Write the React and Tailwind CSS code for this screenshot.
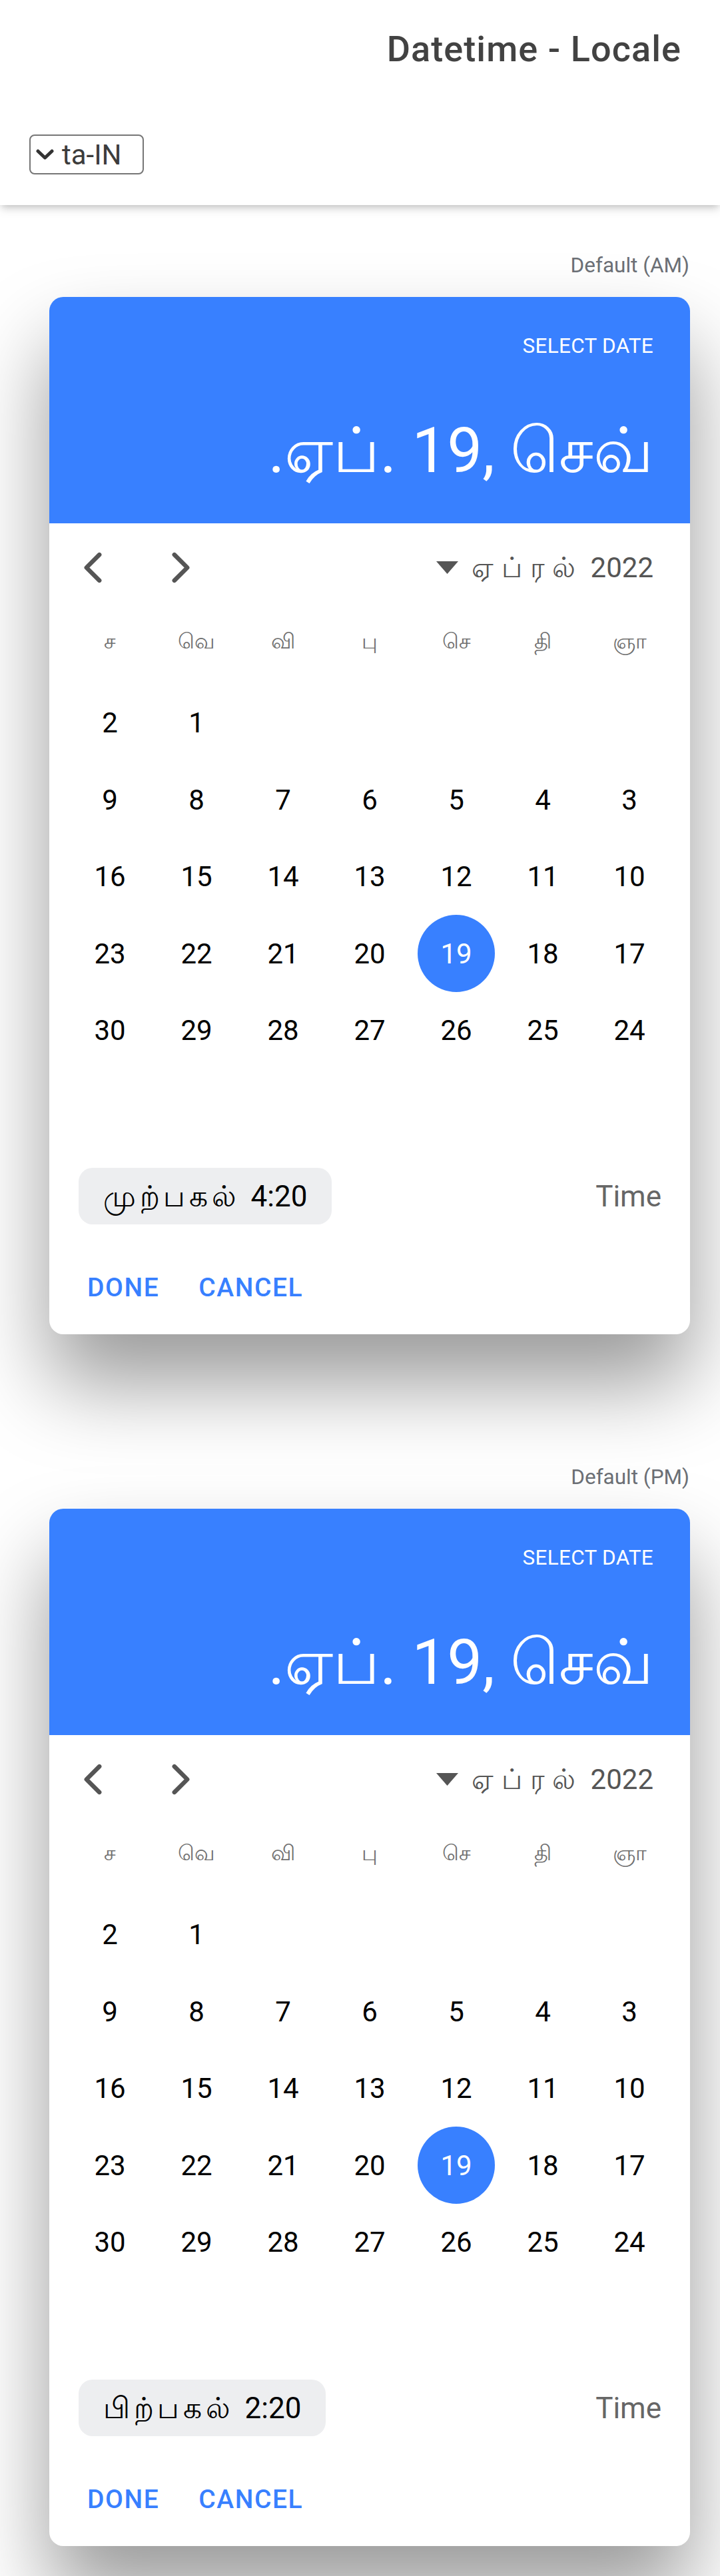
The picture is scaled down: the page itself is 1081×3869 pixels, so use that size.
import React from 'react';

const BLUE = '#3880ff';

const weekdays = ['ச', 'வெ', 'வி', 'பு', 'செ', 'தி', 'ஞா'];

const rows = [
  [2, 1, null, null, null, null, null],
  [9, 8, 7, 6, 5, 4, 3],
  [16, 15, 14, 13, 12, 11, 10],
  [23, 22, 21, 20, 19, 18, 17],
  [30, 29, 28, 27, 26, 25, 24],
  [null, null, null, null, null, null, null],
];

const Chevron = ({ dir }) => (
  <svg width="69" height="69" viewBox="0 0 512 512" className="text-[#555]">
    <path
      d={dir === 'left' ? 'M328 112L184 256l144 144' : 'M184 112l144 144-144 144'}
      fill="none"
      stroke="currentColor"
      strokeWidth="48"
      strokeLinecap="round"
      strokeLinejoin="round"
    />
  </svg>
);

const DatetimeCard = ({ label, meridiem, time }) => (
  <section>
    <p className="pr-[46px] text-right text-[31.5px] leading-[42px] text-[#6b6f75]">{label}</p>
    <div className="mt-[26px] ml-[74px] w-[962px] rounded-[21px] bg-white shadow-[0_73px_126px_rgba(0,0,0,0.4)]">
      {/* Header */}
      <div className="h-[340px] rounded-t-[21px] bg-[#3880ff] px-[55px] pt-[53px] text-right text-white">
        <p className="text-[31.5px] leading-[42px] tracking-[0.01em]">SELECT DATE</p>
        <p dir="rtl" className="mt-[80px] text-[94px] leading-[113px]">ஏப். 19, செவ்.</p>
      </div>

      {/* Month nav */}
      <div className="flex h-[132px] items-center justify-between pl-[31px] pr-[55px]">
        <div className="flex items-center gap-[63px]">
          <Chevron dir="left" />
          <Chevron dir="right" />
        </div>
        <div className="flex items-center gap-[20px] text-[42px] text-[#555]">
          <svg width="33" height="19" viewBox="0 0 33 19">
            <path d="M0 0h33L16.5 19z" fill="#555" />
          </svg>
          <span>
            <span className="tracking-[0.28em]">ஏப்ரல்</span> 2022
          </span>
        </div>
      </div>

      {/* Weekdays */}
      <div className="grid h-[90px] grid-cols-7 items-center px-[26px] text-[32px] text-[#707070]">
        {weekdays.map((d) => (
          <span key={d} className="text-center">{d}</span>
        ))}
      </div>

      {/* Days */}
      <div className="mt-[20px] grid grid-cols-7 px-[26px]">
        {rows.flat().map((n, i) => (
          <div key={i} className="flex h-[115.5px] items-center justify-center">
            {n === 19 ? (
              <span className="flex h-[116px] w-[116px] items-center justify-center rounded-full bg-[#3880ff] text-[42px] text-white">
                {n}
              </span>
            ) : (
              <span className="text-[42px] text-black">{n}</span>
            )}
          </div>
        ))}
      </div>

      {/* Time */}
      <div className="mt-[33px] flex items-center justify-between pl-[44px] pr-[43px]">
        <div className="flex h-[85px] items-center gap-[16px] rounded-[21px] bg-[#edeef0] px-[37px] text-[44px] text-black">
          <span className="tracking-[0.13em]">{meridiem}</span>
          <span>{time}</span>
        </div>
        <span className="text-[44px] text-[#666]">Time</span>
      </div>

      {/* Buttons */}
      <div className="mt-[76px] flex gap-[59px] pb-[50px] pl-[57px] text-[39px] font-medium leading-[39px] tracking-[0.04em]" style={{ color: BLUE }}>
        <span>DONE</span>
        <span>CANCEL</span>
      </div>
    </div>
  </section>
);

export default function App() {
  return (
    <div className="min-h-[3869px] bg-white font-['Roboto','Noto_Sans',sans-serif]">
      <header className="relative z-10 h-[308px] bg-white shadow-[0_5px_10px_-3px_rgba(0,0,0,0.2),0_8px_14px_rgba(0,0,0,0.08)]">
        <div className="flex h-[147px] items-center justify-end pr-[58px]">
          <h1 className="text-[54px] font-medium tracking-[0.02em] text-[#424242]">Datetime - Locale</h1>
        </div>
        <div className="pl-[44px] pt-[55px]">
          <div className="flex h-[60px] w-[172px] items-center gap-[12px] rounded-[8px] border-[2.6px] border-[#767676] pl-[8px] text-[42px] text-[#3c3c3c]">
            <svg width="27" height="16" viewBox="0 0 27 16">
              <path d="M3 3l10.5 10L24 3" fill="none" stroke="#333" strokeWidth="5" strokeLinecap="round" strokeLinejoin="round" />
            </svg>
            <span>ta-IN</span>
          </div>
        </div>
      </header>

      <main className="pt-[70px]">
        <DatetimeCard label="Default (AM)" meridiem="முற்பகல்" time="4:20" />
        <div className="mt-[194px]">
          <DatetimeCard label="Default (PM)" meridiem="பிற்பகல்" time="2:20" />
        </div>
      </main>
    </div>
  );
}
